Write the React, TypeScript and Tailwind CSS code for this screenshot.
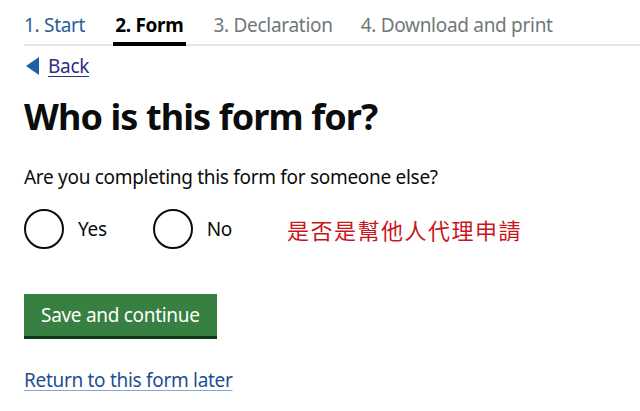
import React, { useState } from 'react';

const steps = [
  { label: '1. Start', state: 'done' },
  { label: '2. Form', state: 'current' },
  { label: '3. Declaration', state: 'todo' },
  { label: '4. Download and print', state: 'todo' },
];

function Radio({ label, checked, onSelect }: { label: string; checked: boolean; onSelect: () => void }) {
  return (
    <label className="flex items-center cursor-pointer" onClick={onSelect}>
      <span className="w-10 h-10 rounded-full border-2 border-[#0b0c0c] flex items-center justify-center shrink-0">
        {checked && <span className="w-5 h-5 rounded-full bg-[#0b0c0c]" />}
      </span>
      <span className="ml-[14px] text-[19px] tracking-[-0.3px] text-[#0b0c0c]">{label}</span>
    </label>
  );
}

export default function App() {
  const [answer, setAnswer] = useState<string | null>(null);

  return (
    <div
      className="w-[640px] h-[411px] bg-white overflow-hidden text-[#0b0c0c]"
      style={{ fontFamily: '"Noto Sans", "Noto Sans CJK TC", sans-serif' }}
    >
      {/* Step navigation */}
      <nav className="ml-6 border-b-2 border-[#e5e6e7]">
        <ul className="flex gap-[28px] pt-[12px]">
          {steps.map(step => (
            <li
              key={step.label}
              className={`text-[19px] leading-[26px] tracking-[-0.3px] pb-[4px] border-b-4 mb-[-2px] ${
                step.state === 'current'
                  ? 'font-bold border-black text-black px-[2px]'
                  : step.state === 'done'
                  ? 'border-transparent text-[#2a5c9c]'
                  : 'border-transparent text-[#6f777b]'
              }`}
            >
              {step.label}
            </li>
          ))}
        </ul>
      </nav>

      <main className="px-6">
        {/* Back link */}
        <a href="#" className="mt-[9px] flex items-center text-[19px] leading-[22px] tracking-[-0.3px] text-[#2a2f85]">
          <svg width="14" height="18" viewBox="0 0 14 18" className="ml-[2px] mr-[8px]">
            <path d="M13 0 L0 9 L13 18 Z" fill="#1d5fa8" />
          </svg>
          <span className="underline underline-offset-[3px]">Back</span>
        </a>

        <h1 className="mt-[20px] text-[36px] leading-[40px] font-bold tracking-[-0.9px]">Who is this form for?</h1>

        <fieldset className="mt-[28px]">
          <legend className="text-[19px] leading-[24px] tracking-[-0.3px]">Are you completing this form for someone else?</legend>
          <div className="mt-[20px] flex items-center">
            <Radio label="Yes" checked={answer === 'yes'} onSelect={() => setAnswer('yes')} />
            <div className="ml-[46px]">
              <Radio label="No" checked={answer === 'no'} onSelect={() => setAnswer('no')} />
            </div>
            <span
              className="ml-[55px] text-[22px] tracking-[1.5px] text-[#c8161d]"
              style={{ fontFamily: '"Noto Sans CJK TC", sans-serif' }}
            >
              是否是幫他人代理申請
            </span>
          </div>
        </fieldset>

        <button className="mt-[45px] h-[42px] px-[17px] bg-[#378041] text-white text-[19px] tracking-[-0.3px] shadow-[0_3px_0_#0b3b16]">
          Save and continue
        </button>

        <div className="mt-[30px]">
          <a href="#" className="text-[19px] tracking-[-0.3px] text-[#1d4f91] underline underline-offset-[3px] decoration-[#8aa5cc]">
            Return to this form later
          </a>
        </div>
      </main>
    </div>
  );
}
